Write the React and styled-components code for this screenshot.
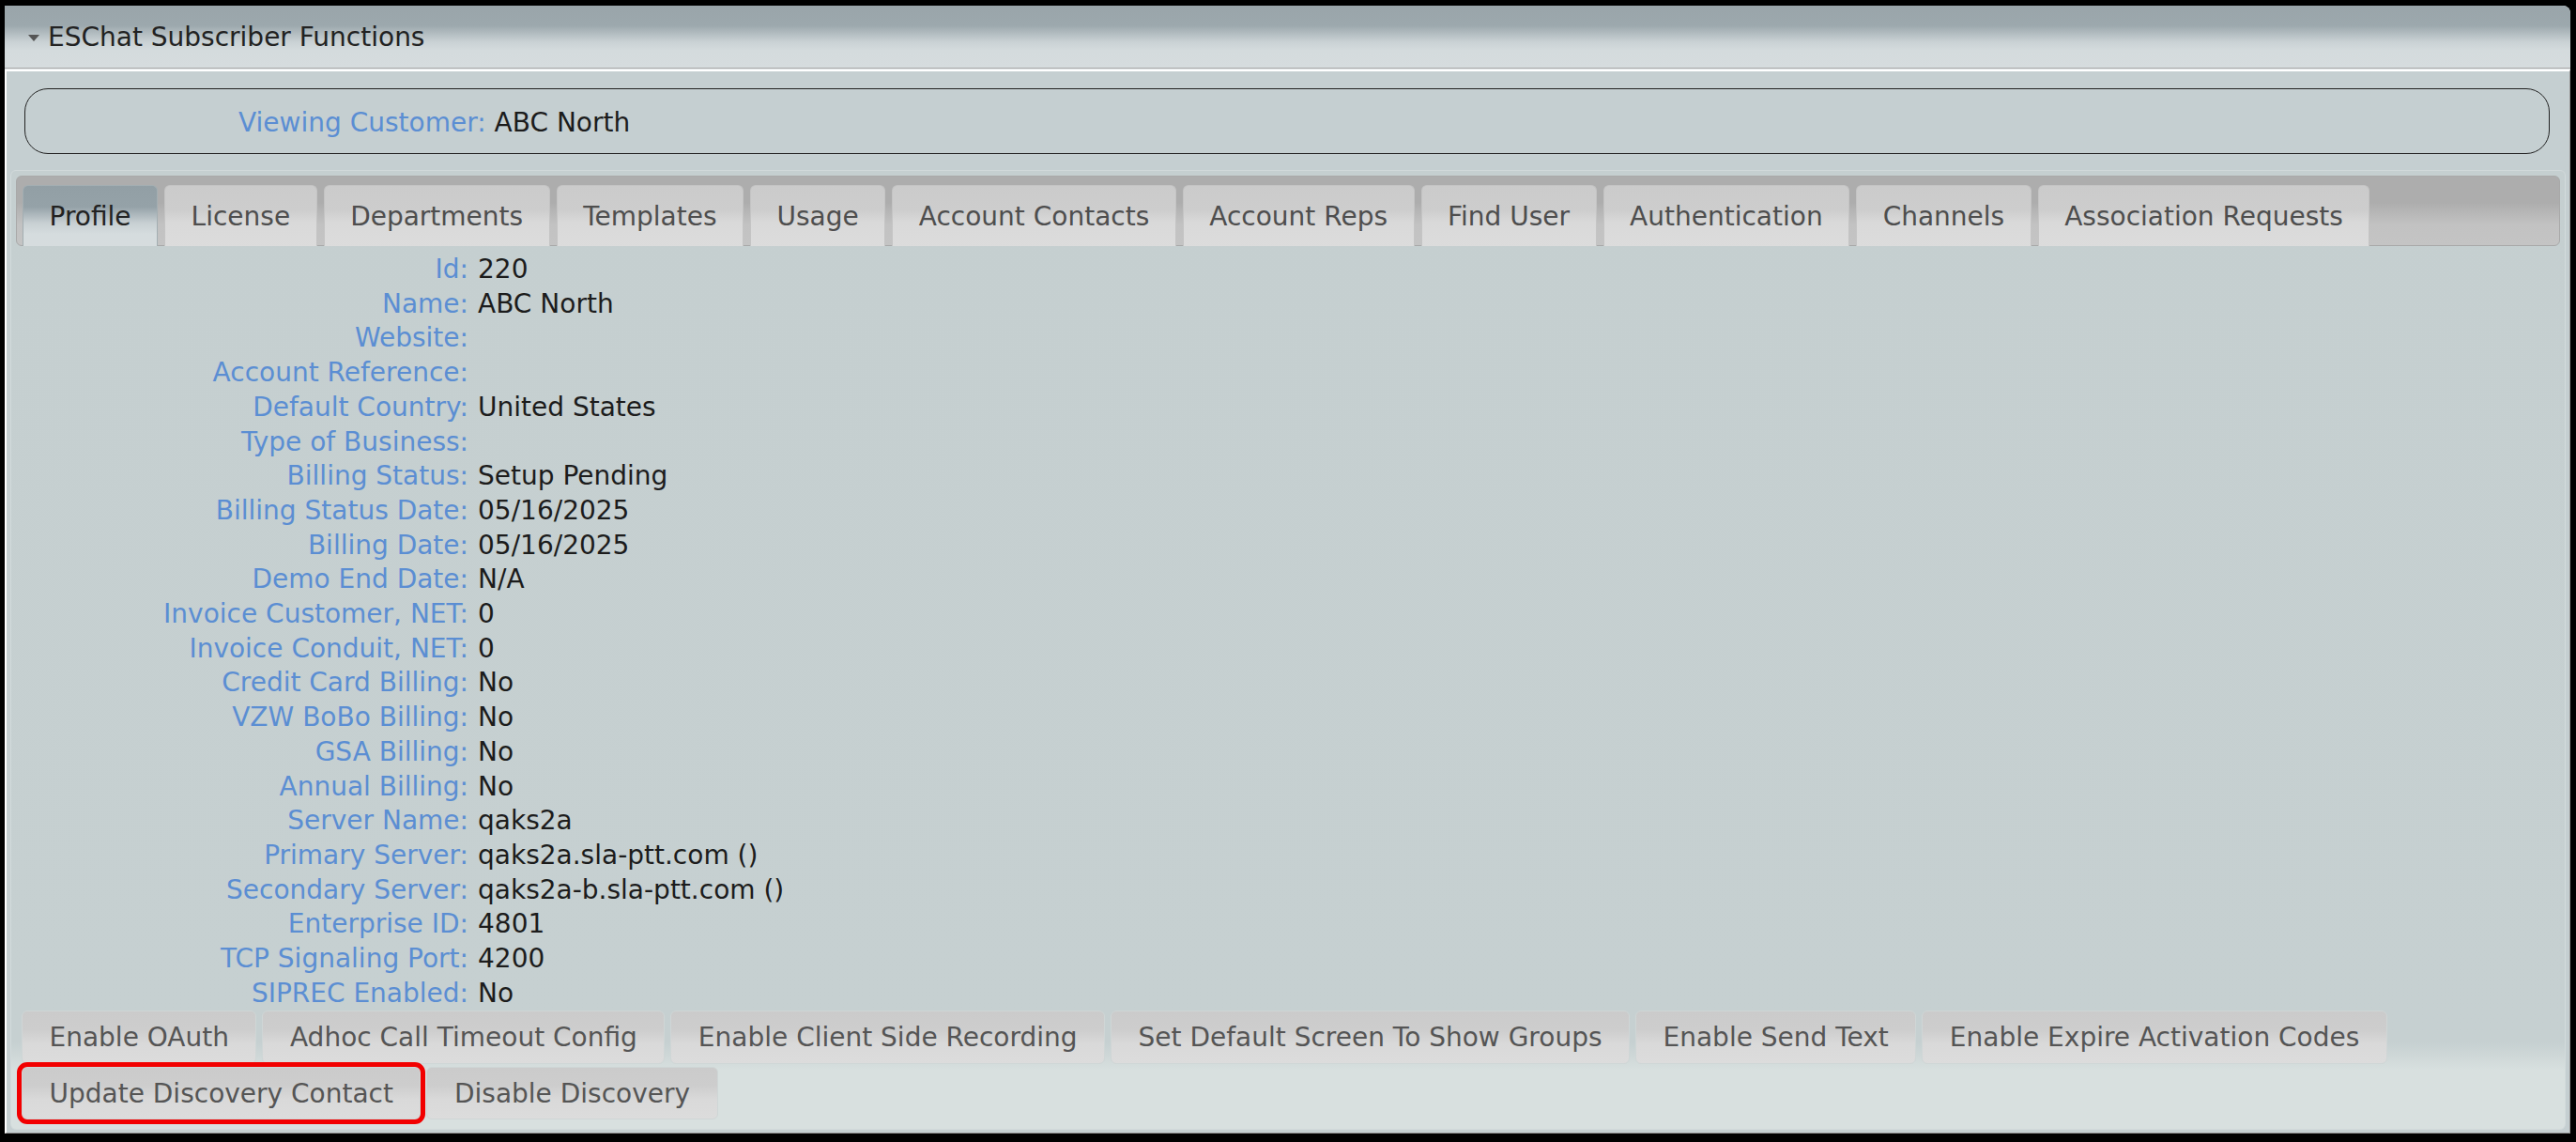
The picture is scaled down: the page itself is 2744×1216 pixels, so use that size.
import React from 'react'
import styled, { createGlobalStyle } from 'styled-components'

const GlobalStyle = createGlobalStyle`
    html, body {
        margin:0;
        padding:0;
        background:#000;
    }
    body {
        font-family:"DejaVu Sans", Verdana, sans-serif;
    }
    * {
        box-sizing:border-box;
    }
`

const Frame = styled.div`
    width:2744px;
    height:1216px;
    padding:6px 6px 9px 5px;
    background:#000;
    display:flex;
`

const Panel = styled.div`
    flex:1;
    display:flex;
    flex-direction:column;
    background:#dfe5e6;
    border-top-right-radius:8px;
`

const Header = styled.div`
    height:67px;
    display:flex;
    align-items:center;
    gap:9px;
    padding-left:25px;
    font-size:28px;
    color:#222;
    border-bottom:1px solid #a9a9a9;
    border-top-right-radius:8px;
    background:linear-gradient(to bottom, #9aa5aa 0%, #9ca8ad 32%, #c9d1d4 58%, #d4dbdd 72%, #d6dcde 100%);
    margin-bottom:1px;
`

const Caret = styled.span`
    width:0;
    height:0;
    border-left:6px solid transparent;
    border-right:6px solid transparent;
    border-top:7px solid #555;
    margin-top:2px;
`

const Content = styled.div`
    flex:1;
    display:flex;
    flex-direction:column;
    padding:4px 4px 3px 4px;
    background:#c5cfd1;
    border-top:2px solid #fff;
    border-left:2px solid #fff;
    border-right:1px solid #9a9a9a;
    border-bottom:1px solid #8f8f8f;
`

const CustomerBox = styled.div`
    height:70px;
    margin:14px 17px 17px 15px;
    padding-left:227px;
    padding-top:2px;
    display:flex;
    align-items:center;
    gap:9px;
    font-size:28px;
    border:1px solid #222;
    border-radius:25px;
`

const Label = styled.span`
    color:#5b8ed3;
`

const Value = styled.span`
    color:#1c1c1c;
`

const TabsBox = styled.div`
    flex:1;
    display:flex;
    flex-direction:column;
    padding:5px;
    border:1px solid #d2dadb;
    border-radius:6px;
    background:linear-gradient(to top, #d8e0df 0px, #d8e0df 62px, #c6d0d1 92px, #c5cfd0 100%);
`

const TabBar = styled.div`
    height:75px;
    display:flex;
    align-items:flex-end;
    gap:7px;
    padding:9px 6px 0 6px;
    border:1px solid #a9a9a9;
    border-radius:6px;
    background:linear-gradient(to bottom, #adadad 0%, #adadad 38%, #c2c2c2 70%, #c4c4c4 100%);
`

const Tab = styled.div`
    height:65px;
    margin-bottom:-1px;
    padding:0 27.5px;
    display:flex;
    align-items:center;
    font-size:28px;
    white-space:nowrap;
    color:${p => (p.$active ? '#222' : '#4e4e4e')};
    border:1px solid ${p => (p.$active ? '#a3aeb2' : '#c4c4c4')};
    border-bottom:none;
    border-radius:6px 6px 0 0;
    background:${p =>
        p.$active
            ? 'linear-gradient(to bottom, #929fa5 0%, #95a2a8 35%, #c8d0d3 62%, #d5dcde 80%, #d6dcde 100%)'
            : 'linear-gradient(to bottom, #cbcbcb 0%, #cdcdcd 40%, #d9d9d9 60%, #dcdcdc 100%)'};
`

const Fields = styled.div`
    display:grid;
    grid-template-columns:482px 1fr;
    column-gap:10px;
    padding-top:7px;
    font-size:28px;
    line-height:36.7px;
`

const FieldLabel = styled(Label)`
    text-align:right;
    white-space:nowrap;
`

const Buttons = styled.div`
    display:flex;
    flex-wrap:wrap;
    gap:3px 6px;
    padding:0 6px;
    margin-bottom:4px;
`

const Button = styled.div`
    height:${p => (p.$short ? 56 : 57)}px;
    padding:0 28.5px;
    display:flex;
    align-items:center;
    font-size:28px;
    white-space:nowrap;
    color:#555;
    border:1px solid #cfd6d6;
    border-radius:6px;
    background:linear-gradient(to bottom, #cbcbcb 0%, #cdcdcd 35%, #d9d9d9 62%, #dcdcdc 100%);
    ${p => p.$marked && `
        outline:5px solid #f20000;
        outline-offset:0px;
    `}
`

const tabs = [
    'Profile', 'License', 'Departments', 'Templates', 'Usage', 'Account Contacts',
    'Account Reps', 'Find User', 'Authentication', 'Channels', 'Association Requests',
]

const fields = [
    ['Id', '220'],
    ['Name', 'ABC North'],
    ['Website', ''],
    ['Account Reference', ''],
    ['Default Country', 'United States'],
    ['Type of Business', ''],
    ['Billing Status', 'Setup Pending'],
    ['Billing Status Date', '05/16/2025'],
    ['Billing Date', '05/16/2025'],
    ['Demo End Date', 'N/A'],
    ['Invoice Customer, NET', '0'],
    ['Invoice Conduit, NET', '0'],
    ['Credit Card Billing', 'No'],
    ['VZW BoBo Billing', 'No'],
    ['GSA Billing', 'No'],
    ['Annual Billing', 'No'],
    ['Server Name', 'qaks2a'],
    ['Primary Server', 'qaks2a.sla-ptt.com ()'],
    ['Secondary Server', 'qaks2a-b.sla-ptt.com ()'],
    ['Enterprise ID', '4801'],
    ['TCP Signaling Port', '4200'],
    ['SIPREC Enabled', 'No'],
]

const actions = [
    'Enable OAuth', 'Adhoc Call Timeout Config', 'Enable Client Side Recording',
    'Set Default Screen To Show Groups', 'Enable Send Text', 'Enable Expire Activation Codes',
]

const App = () => {
    return (
        <Frame>
            <GlobalStyle />
            <Panel>
                <Header>
                    <Caret />
                    ESChat Subscriber Functions
                </Header>
                <Content>
                    <CustomerBox>
                        <Label>Viewing Customer:</Label>
                        <Value>ABC North</Value>
                    </CustomerBox>
                    <TabsBox>
                        <TabBar>
                            {tabs.map((t, i) => (
                                <Tab key={t} $active={i === 0}>{t}</Tab>
                            ))}
                        </TabBar>
                        <Fields>
                            {fields.map(([label, value]) => (
                                <React.Fragment key={label}>
                                    <FieldLabel>{label}:</FieldLabel>
                                    <Value>{value}</Value>
                                </React.Fragment>
                            ))}
                        </Fields>
                        <Buttons>
                            {actions.map(a => (
                                <Button key={a}>{a}</Button>
                            ))}
                            <Button $short $marked>Update Discovery Contact</Button>
                            <Button $short>Disable Discovery</Button>
                        </Buttons>
                    </TabsBox>
                </Content>
            </Panel>
        </Frame>
    )
}

export default App
